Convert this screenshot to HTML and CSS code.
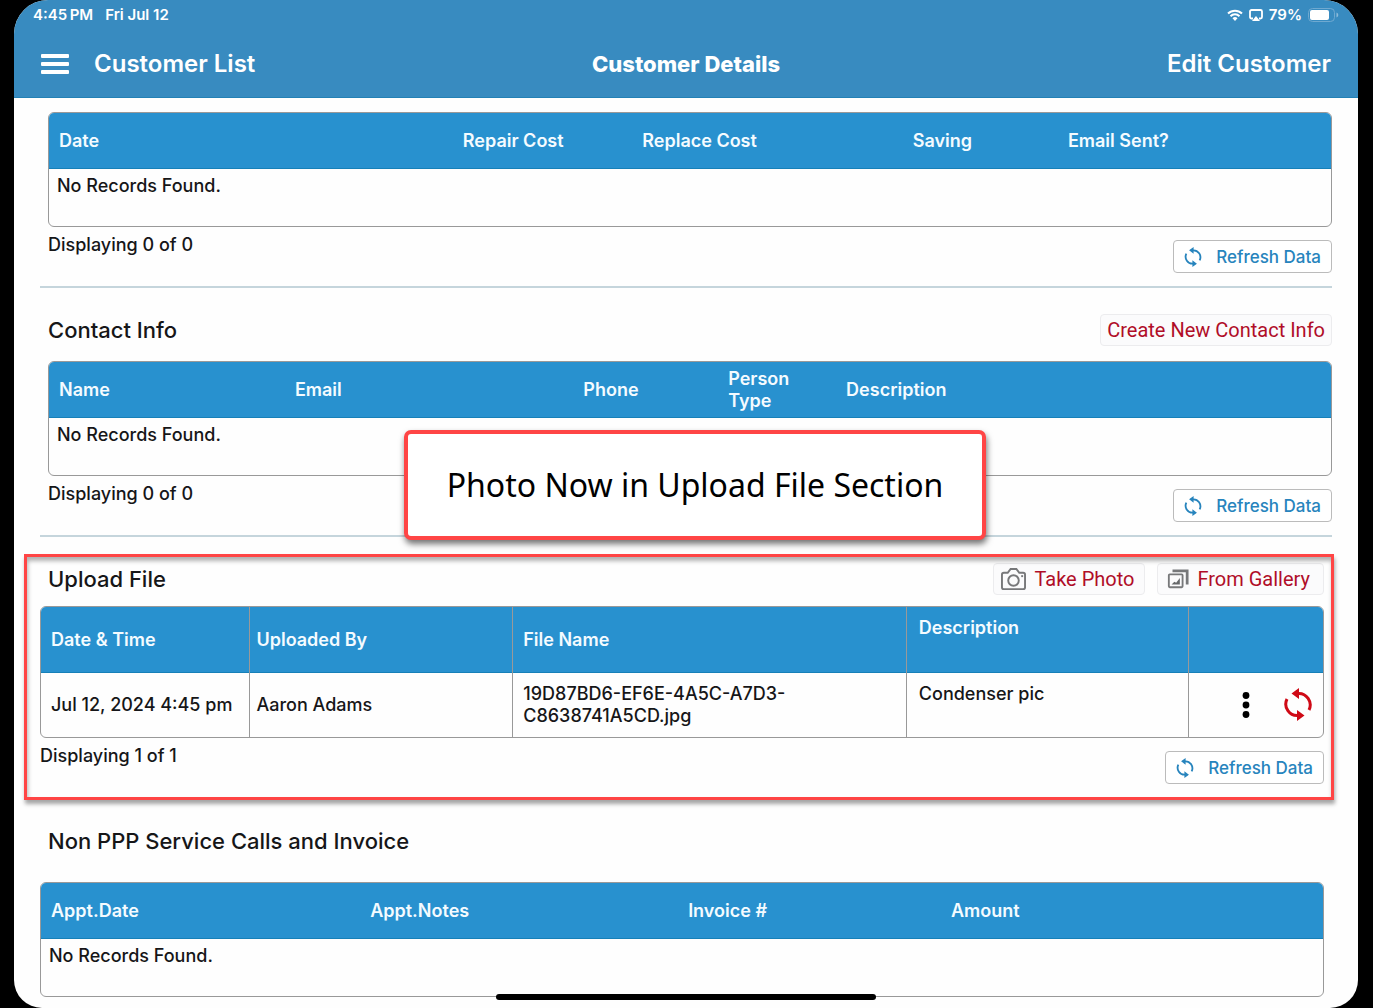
FILE: index.html
```html
<!DOCTYPE html>
<html lang="en">
<head>
<meta charset="utf-8">
<meta name="viewport" content="width=device-width, initial-scale=1">
<title>Customer Details</title>
<link rel="stylesheet" href="styles.css">
</head>
<body>
<svg class="sprite" aria-hidden="true">
  <symbol id="sync" viewBox="0 0 27 33"><path d="M13 5.500A11.500 11.500 0 0 1 24.500 22M14 27.500A11.500 11.500 0 0 1 2.500 11" fill="none" stroke="currentColor" stroke-width="3"/><path d="M7 5.500L14.500 0v11zM20 27.500L12.500 22v11z"/></symbol>
</svg>
<div class="device">
  <header class="top">
    <div class="status">
      <div class="status-side"><span>4:45&#8201;PM</span><span>Fri Jul 12</span></div>
      <div class="status-side status-right">
        <svg class="wifi" viewBox="0 0 16 12" aria-hidden="true"><path d="M1 4.500a10 10 0 0 1 14 0M3.500 7.200a6.400 6.400 0 0 1 9 0" fill="none" stroke="currentColor" stroke-width="2"/><path d="M5.500 9.200a3.600 3.600 0 0 1 5 0L8 12z"/></svg>
        <svg class="cast" viewBox="0 0 14 12" aria-hidden="true"><path d="M4 9.500H2.500A1.500 1.500 0 0 1 1 8V2.500A1.500 1.500 0 0 1 2.500 1h9A1.500 1.500 0 0 1 13 2.500V8a1.500 1.500 0 0 1-1.500 1.500H10" fill="none" stroke="currentColor" stroke-width="1.800"/><path d="M7 7l4 5H3z"/></svg>
        <span>79%</span>
        <svg class="battery" viewBox="0 0 31 14" aria-hidden="true"><rect x=".5" y=".5" width="26" height="13" rx="4" fill="none" stroke="#6fa9d0"/><rect x="2" y="2" width="19" height="10" rx="2"/><path d="M28.500 4.500v5q1.800-.7 1.800-2.500t-1.800-2.500z" fill="#8dbbd9"/></svg>
      </div>
    </div>
    <nav class="nav">
      <div class="nav-left">
        <button class="menu" aria-label="Menu"><span></span><span></span><span></span></button>
        <a href="#list">Customer List</a>
      </div>
      <h1>Customer Details</h1>
      <a class="nav-right" href="#edit">Edit Customer</a>
    </nav>
  </header>

  <main class="content">
    <section class="section">
      <div class="frame">
        <table class="grid">
          <colgroup><col class="s-date"><col class="s-repair"><col class="s-replace"><col class="s-saving"><col></colgroup>
          <thead><tr><th>Date</th><th>Repair Cost</th><th>Replace Cost</th><th>Saving</th><th>Email Sent?</th></tr></thead>
          <tbody><tr><td class="empty" colspan="5">No Records Found.</td></tr></tbody>
        </table>
      </div>
      <div class="foot"><p>Displaying 0 of 0</p><button class="refresh"><svg aria-hidden="true"><use href="#sync"/></svg>Refresh Data</button></div>
    </section>
    <hr>
    <section class="section">
      <div class="head"><h2>Contact Info</h2><div class="actions"><button class="action">Create New Contact Info</button></div></div>
      <div class="frame">
        <table class="grid">
          <colgroup><col class="c-name"><col class="c-email"><col class="c-phone"><col class="c-type"><col></colgroup>
          <thead><tr><th>Name</th><th>Email</th><th>Phone</th><th>Person<br>Type</th><th>Description</th></tr></thead>
          <tbody><tr><td class="empty" colspan="5">No Records Found.</td></tr></tbody>
        </table>
      </div>
      <div class="foot"><p>Displaying 0 of 0</p><button class="refresh"><svg aria-hidden="true"><use href="#sync"/></svg>Refresh Data</button></div>
    </section>
    <hr>
    <section class="section wide marked">
      <div class="head"><h2>Upload File</h2><div class="actions">
        <button class="action photo"><svg viewBox="0 0 28 26" aria-hidden="true"><path d="M4 6h4l3-4h6l3 4h4q2 0 2 2v13q0 2-2 2H4q-2 0-2-2V8q0-2 2-2z"/><circle cx="14" cy="14" r="5.500"/><path d="M22 9.500h2"/></svg>Take Photo</button>
        <button class="action gallery"><svg viewBox="0 0 24 24" aria-hidden="true"><path d="M6 3h16v15" stroke-width="3"/><rect x="2" y="7" width="15" height="14" rx="1"/><path class="solid" d="M5 18l3-3 2 1 4-5v7z"/></svg>From Gallery</button>
      </div></div>
      <div class="frame">
        <table class="grid ruled">
          <colgroup><col class="u-date"><col class="u-by"><col class="u-file"><col class="u-desc"><col></colgroup>
          <thead><tr><th>Date &amp; Time</th><th>Uploaded By</th><th>File Name</th><th class="upper">Description</th><th aria-label="Actions"></th></tr></thead>
          <tbody><tr><td>Jul 12, 2024 4:45 pm</td><td>Aaron Adams</td><td>19D87BD6-EF6E-4A5C-A7D3-<br>C8638741A5CD.jpg</td><td class="upper">Condenser pic</td>
            <td><div class="row-actions"><button class="more" aria-label="More"><svg viewBox="0 0 8 28"><circle cx="4" cy="4.500" r="3.400"/><circle cx="4" cy="14" r="3.400"/><circle cx="4" cy="23.500" r="3.400"/></svg></button><button class="resync" aria-label="Sync"><svg><use href="#sync"/></svg></button></div></td></tr></tbody>
        </table>
      </div>
      <div class="foot"><p>Displaying 1 of 1</p><button class="refresh"><svg aria-hidden="true"><use href="#sync"/></svg>Refresh Data</button></div>
      <div class="highlight"></div>
      <div class="callout">Photo Now in Upload File Section</div>
    </section>
    <hr>
    <section class="section wide last">
      <div class="head"><h2>Non PPP Service Calls and Invoice</h2></div>
      <div class="frame">
        <table class="grid">
          <colgroup><col class="a-date"><col class="a-notes"><col class="a-inv"><col></colgroup>
          <thead><tr><th>Appt.Date</th><th>Appt.Notes</th><th>Invoice #</th><th>Amount</th></tr></thead>
          <tbody><tr><td class="empty" colspan="4">No Records Found.</td></tr></tbody>
        </table>
      </div>
    </section>
  </main>
  <div class="home"></div>
</div>
</body>
</html>
```
FILE: styles.css
```css
* { box-sizing: border-box; }
body { margin: 0; background: #000; font-family: Inter, "Liberation Sans", sans-serif; font-size: 18px; font-weight: 500; line-height: 22px; color: #161618; }
.sprite { position: absolute; width: 0; height: 0; }
h1, h2, p { margin: 0; }
a { color: inherit; text-decoration: none; }
button { font: inherit; color: inherit; background: none; border: 0; padding: 0; }
svg { display: block; fill: currentColor; flex: none; }

.device { position: relative; height: 100vh; margin: 0 15px 0 14px; background: #fefefe; border-radius: 34px 34px 28px 28px; overflow: hidden; }
.top { background: #388bc0; color: #fff; height: 98px; border-bottom: 1px solid #2381b5; font-weight: 600; }
.status { display: flex; justify-content: space-between; height: 30px; padding: 0 19px; align-items: center; font-size: 15px; }
.status-side { display: flex; gap: 12px; align-items: center; }
.status-right { gap: 6px; }
.wifi { width: 16px; height: 12px; }
.cast { width: 14px; height: 12px; }
.battery { width: 31px; height: 14px; }
.nav { display: grid; grid-template-columns: 1fr auto 1fr; align-items: center; height: 68px; padding: 0 27px; font-size: 24px; line-height: 28px; }
.nav-left { display: flex; align-items: center; gap: 25px; }
.nav-right { justify-self: end; }
.menu { width: 28px; display: grid; gap: 4px; }
.menu span { height: 4px; border-radius: 1px; background: #fff; }
h1 { font-size: 22px; font-weight: 800; line-height: 28px; }

.content { padding: 14px 26px 0; }
.section { padding: 0 0 0 8px; }
.wide { padding: 0 8px 0 0; }
hr { margin: 13px 0 25px; border: 0; border-top: 2px solid #c5d5dc; }
.head { display: flex; justify-content: space-between; align-items: center; height: 34px; margin-bottom: 14px; }
.wide .head { padding-left: 8px; margin-bottom: 10px; }
.last .head { margin-bottom: 24px; }
h2 { font-size: 22px; font-weight: 500; line-height: 28px; }
.actions { display: flex; gap: 12px; }
.action { height: 32px; padding: 0 6px; border: 1px solid #ececee; border-radius: 4px; background: #fbfbfc; color: #b00d28; font: 400 20px/24px Roboto, sans-serif; display: flex; align-items: center; }
.photo { gap: 7px; padding-right: 10px; }
.gallery { gap: 8px; padding: 0 13px 0 9px; }
.action svg { fill: none; stroke: #77787a; stroke-width: 2; }
.action .solid { fill: #66686a; stroke: none; }
.photo svg { width: 27px; height: 25px; }
.gallery svg { width: 22px; height: 22px; }

.frame { border: 1px solid #999; border-radius: 6px; overflow: hidden; }
.grid { width: 100%; table-layout: fixed; border-collapse: collapse; }
th { height: 55px; padding: 2px 10px 0; text-align: left; background: #2891cf; color: #f4fbff; font-weight: 600; }
td { padding: 0 10px; }
thead tr { border-bottom: 1px solid #1680b8; }
td.empty { height: 58px; padding: 6px 8px 0; vertical-align: top; }
.ruled th { height: 65px; }
.ruled td { height: 65px; }
.ruled th + th, .ruled td + td { border-left: 1px solid #999; }
.ruled th:nth-child(2), .ruled td:nth-child(2) { padding-left: 6px; }
.ruled .upper { padding: 10px 12px; vertical-align: top; }
.s-date { width: 31.500%; } .s-repair { width: 14%; } .s-replace { width: 21.100%; } .s-saving { width: 12.100%; }
.c-name { width: 18.400%; } .c-email { width: 22.500%; } .c-phone { width: 11.300%; } .c-type { width: 9.200%; }
.u-date { width: 16.300%; } .u-by { width: 20.500%; } .u-file { width: 30.700%; } .u-desc { width: 22%; }
.a-date { width: 24.900%; } .a-notes { width: 24.800%; } .a-inv { width: 20.500%; }
.row-actions { display: flex; justify-content: flex-end; align-items: center; gap: 34px; padding-right: 1px; }
.more svg { width: 8px; height: 28px; color: #000; }
.resync svg { width: 28px; height: 33px; }
.resync { color: #cf0a16; }

.foot { display: flex; justify-content: space-between; align-items: flex-start; padding-top: 13px; }
.foot p { margin-top: -6px; }
.refresh { height: 33px; padding: 0 10px; border: 1px solid #bbb; border-radius: 4px; background: #fff; color: #2784bd; font-size: 17px; display: flex; align-items: center; gap: 14px; }
.refresh svg { width: 18px; height: 20px; }

.marked { position: relative; }
.highlight { position: absolute; inset: -8px -2px -16px -16px; border: 3px solid #ff4545; box-shadow: 1px 4px 4px rgba(0,0,0,.35), inset 1px 4px 4px rgba(0,0,0,.3); pointer-events: none; }
.callout { position: absolute; left: 50%; bottom: 100%; width: 582px; height: 110px; margin: 0 0 22px -282px; display: grid; place-items: center; border: 4px solid #ff4545; border-radius: 7px; background: #fff; color: #000; font: 400 32px/40px "Noto Sans", sans-serif; box-shadow: 1px 4px 6px rgba(0,0,0,.55); }
.home { position: absolute; left: 50%; bottom: 8px; width: 380px; height: 6px; margin-left: -190px; border-radius: 3px; background: #000; }
```
